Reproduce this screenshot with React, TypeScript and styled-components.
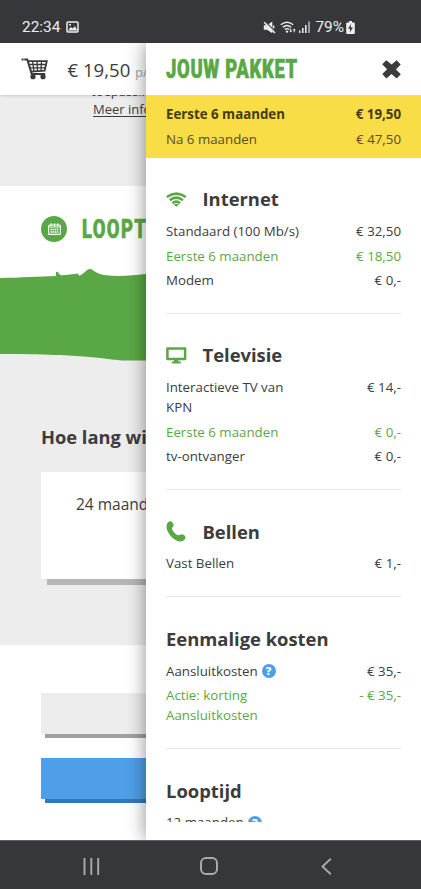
import React from "react";
import styled, { createGlobalStyle, css } from "styled-components";

const GlobalStyle = createGlobalStyle`
  *, *::before, *::after { box-sizing: border-box; }
  body {
    margin: 0;
    background: #fff;
    color: #3c3c3c;
    font-family: "Open Sans", "Noto Sans", sans-serif;
    overflow: hidden;
  }
  svg { display: block; flex: none; }
`;

const green = "#5aa845";
const blue = "#4f9fe8";
const chrome = "#36373b";

const Phone = styled.div`
  display: flex;
  flex-direction: column;
  width: 421px;
  height: 889px;
  overflow: hidden;
`;

const StatusBar = styled.header`
  display: flex;
  align-items: center;
  height: 43px;
  flex: none;
  padding: 11px 66px 0 22px;
  background: ${chrome};
  color: #eeeeef;
  font: 400 16px/20px Roboto, sans-serif;
`;

const Clock = styled.span`
  width: 44px;
  font-size: 15.4px;
`;

const StatusIcons = styled.div`
  display: flex;
  align-items: center;
  margin-left: auto;
`;

const MuteSlot = styled.span`
  margin-right: 4px;
`;

const SignalSlot = styled.span`
  margin-left: 1px;
`;

const Battery = styled.span`
  margin: 0 2px 0 4px;
  font-size: 15.4px;
`;

const Viewport = styled.main`
  position: relative;
  height: 796.5px;
  flex: none;
  overflow: hidden;
`;

const TopBar = styled.div`
  display: flex;
  align-items: center;
  position: relative;
  height: 52px;
  padding: 0 0 1px 20.5px;
  background: #fff;
  box-shadow: 0 1px 3px rgba(0, 0, 0, 0.16);
`;

const CartPrice = styled.span`
  margin: 1px 0 0 19px;
  font-size: 18.6px;
  white-space: nowrap;
  small {
    margin-left: 5px;
    font-size: 12.5px;
    color: #a3a3a3;
  }
`;

const Intro = styled.section`
  height: 91px;
  padding-left: 91px;
  background: #ededed;
  font-size: 13px;
  line-height: 18px;
  overflow: hidden;
  p { margin: -13px 0 0; white-space: nowrap; }
  a { display: block; margin-left: 2px; text-decoration: underline; text-underline-offset: 2px; }
`;

const StepTitle = styled.section`
  display: flex;
  align-items: center;
  height: 81px;
  padding: 5px 0 0 41px;
`;

const CalendarDot = styled.span`
  display: grid;
  place-items: center;
  width: 26px;
  height: 26px;
  border-radius: 50%;
  background: ${green};
`;

const Display = styled.h1<{ $spacing: number }>`
  margin: 0;
  color: ${green};
  font: 900 26px/30px Roboto, sans-serif;
  letter-spacing: ${(p) => p.$spacing}px;
  white-space: nowrap;
  -webkit-text-stroke: 0.6px ${green};
  transform: scaleX(0.71);
  transform-origin: left center;
`;

const StepName = styled.div`
  margin-left: 15px;
`;

const Duration = styled.section`
  height: 378px;
  background: linear-gradient(#fff 40px, #ededed 40px);
`;

const Question = styled.h2`
  margin: 62.5px 0 0 41px;
  font-size: 18.3px;
  line-height: 26px;
  white-space: nowrap;
`;

const OptionCard = styled.div`
  height: 107px;
  margin: 22px 0 0 41px;
  padding: 20px 0 0 35px;
  background: #fff;
  box-shadow: 6px 6px 0 #b6b6b6;
  font-size: 15.5px;
  line-height: 24px;
`;

const Actions = styled.section`
  display: flex;
  flex-direction: column;
  gap: 23.5px;
  padding: 48px 0 0 41px;
`;

const ActionButton = styled.button<{ $primary?: boolean }>`
  height: 41px;
  border: 0;
  background: ${(p) => (p.$primary ? blue : "#ededed")};
  box-shadow: 4px 4px 0 ${(p) => (p.$primary ? "#3478b8" : "#a0a0a0")};
`;

const Drawer = styled.aside`
  position: absolute;
  top: 0;
  right: 0;
  bottom: 0;
  width: 275.5px;
  background: #fff;
  box-shadow: 0 0 18px rgba(0, 0, 0, 0.45);
`;

const DrawerHeader = styled.div`
  display: flex;
  align-items: center;
  justify-content: space-between;
  height: 52px;
  padding: 0 20px;
`;

const rows = css`
  display: flex;
  flex-direction: column;
  gap: 4.1px;
`;

const Totals = styled.div`
  ${rows}
  height: 63px;
  padding: 9.4px 20px 0 20.5px;
  background: #f9dd47;
  color: #5a4c1e;
`;

const DrawerScroll = styled.div`
  height: 664px;
  padding: 0 20px 0 20.5px;
  overflow: hidden;
`;

const Section = styled.section`
  padding: 28.3px 0 22.7px;
  border-bottom: 1px solid #e8e8e8;
`;

const SectionTitle = styled.h2`
  display: flex;
  align-items: center;
  height: 26px;
  margin: 0 0 8.9px;
  font-size: 18.4px;
  line-height: 26px;
`;

const IconSlot = styled.span`
  width: 36.5px;
`;

const Rows = styled.div`
  ${rows}
`;

const Row = styled.div<{ $tone?: "discount" | "strong" }>`
  display: flex;
  justify-content: space-between;
  font-size: 13.3px;
  line-height: 20.3px;
  color: ${(p) => (p.$tone === "discount" ? green : "inherit")};
  ${(p) => p.$tone === "strong" && "font-weight: 700; color: #463a13;"}
`;

const RowLabel = styled.span`
  display: flex;
  align-items: center;
  max-width: 140px;
`;

const RowPrice = styled.span`
  white-space: nowrap;
`;

const Help = styled.span`
  display: inline-grid;
  place-items: center;
  width: 14px;
  height: 14px;
  margin-left: 4px;
  border-radius: 50%;
  background: ${blue};
  color: #fff;
  font-size: 11px;
  font-weight: 800;
  line-height: 14px;
`;

const NavBar = styled.nav`
  display: flex;
  align-items: center;
  justify-content: space-between;
  flex: 1;
  padding: 3px 89px 0 82.5px;
  border-top: 1px solid #5e6062;
  background: ${chrome};
`;

const HomeSlot = styled.span`
  margin-right: 3px;
`;

const PictureIcon = () => (
  <svg width="13" height="12" viewBox="0 0 13 12">
    <rect x="1" y="1" width="11" height="10" rx="1" fill="none" stroke="#eee" strokeWidth="1.5" />
    <path d="M2 9.5 4.8 6l1.7 1.6L9 5.2l2.4 4.3z" fill="#eee" />
    <circle cx="4" cy="3.8" r="1" fill="#eee" />
  </svg>
);

const MuteIcon = () => (
  <svg width="13" height="13" viewBox="0 0 13 13">
    <path d="M.8 4.300h3.200L9.300.5v11.700L4 8.700H.8z" fill="#eee" />
    <path d="M2.200.8 12.600 11" stroke={chrome} strokeWidth="1.300" />
    <path d="M1.200 1.200 12 12M10.600 4.500v3" stroke="#eee" strokeWidth="1.500" />
  </svg>
);

const StatusWifiIcon = () => (
  <svg width="17" height="13" viewBox="0 0 17 13" fill="none" stroke="#eee" strokeWidth="1.4">
    <path d="M.8 3.8Q7 -1.5 13.2 3.8M2.8 6.2Q7 2.8 11.2 6.2M4.8 8.4Q7 6.8 9.2 8.4" />
    <circle cx="7" cy="10.6" r="1.2" fill="#eee" stroke="none" />
    <path d="m9.2 9.7 1.5 1.8 1.5-1.8zM12.6 9.3 14.2 7.5 15.8 9.3z" fill="#eee" stroke="none" />
    <path d="M10.7 7.5v3M14.2 8.7v2.6" strokeWidth="1" />
  </svg>
);

const SignalIcon = () => (
  <svg width="13" height="12" viewBox="0 0 13 12" fill="#e8e8e8">
    <path d="M1 9.5h1.5V12H1zM4 7h1.6v5H4zM7 4h1.6v8H7z" />
    <path d="M10.2.5h1.6V12h-1.6z" fill="#b5b5b8" />
  </svg>
);

const BatteryIcon = () => (
  <svg width="9" height="13" viewBox="0 0 9 13">
    <path d="M3 0h3v1.5h1.8c.6 0 1 .4 1 1V12c0 .5-.4 1-1 1H1.2c-.6 0-1-.5-1-1V2.500c0-.6.4-1 1-1H3z" fill="#eee" />
    <path d="M5.200 3 2 7.800h2.200L3.800 11.500 7 6.600H4.800z" fill={chrome} />
  </svg>
);

const CartIcon = () => (
  <svg width="28" height="22" viewBox="0 0 28 22" fill="none" stroke="#3a3a3a">
    <path d="M.6 1.500h2M3.200 1.500h3.100l4.400 14.500h13.500" strokeWidth="2" />
    <path d="M6.800 3.200h19l-2.200 9.500-13.600 1" strokeWidth="1.800" />
    <path d="M8 6.500h17.200M9 9.900h15.500M11.500 3.500l1.500 9.500M16 3.500l.5 9.300M20.500 3.500l-.5 9" strokeWidth="1.300" />
    <circle cx="12" cy="18.700" r="2.600" fill="#3a3a3a" stroke="none" />
    <circle cx="22" cy="18.700" r="2.600" fill="#3a3a3a" stroke="none" />
  </svg>
);

const CloseIcon = () => (
  <svg width="19" height="19" viewBox="0 0 19 19">
    <path d="M.2 4.200 4.300.2l5.300 4.400L14.600.3l4.100 4.200-4.700 5 4.800 4.700-4.100 4.300-5.200-4.400-5.200 4.500L.3 14l4.800-4.700z" fill="#3c3c3c" />
  </svg>
);

const CalendarIcon = () => (
  <svg width="13" height="12" viewBox="0 0 13 12">
    <rect x=".6" y="2" width="11.800" height="9.400" rx="1" fill="none" stroke="#fff" strokeWidth="1.100" />
    <path d="M3.200.3v2.800M6.500.3v2.800M9.800.3v2.800M1 4h11" stroke="#fff" strokeWidth="1.200" />
    <path d="M2.500 6.500h8M2.500 9h8" stroke="#fff" strokeWidth="1.500" strokeDasharray="1.600 .5" />
  </svg>
);

const BrushStroke = () => (
  <svg width="421" height="94" viewBox="0 0 421 94">
    <path
      d="M0 11C20 10.800 40 9.300 56 9L56 5 57.500 4.800 60.500 8.200C67 8.300 73 6.800 78 6.500L79 8.700C84 7.500 86 2 90 2C94 2.500 95 6.500 104 8C119 10 133 8.500 145 7L421 5V92L145 93.500H122C100 91.500 91 87.500 0 87Z"
      fill={green}
    />
  </svg>
);

const WifiIcon = () => (
  <svg width="21" height="15" viewBox="0 0 21 15" fill="none" stroke={green} strokeWidth="2.500">
    <path d="M.8 5Q10.300-1.800 19.800 5M3.700 8.300Q10.300 3 16.900 8.300M6.500 11.200Q10.300 8 14.100 11.200" />
    <path d="M7.700 12.500Q10.300 10.800 12.900 12.500L10.300 14.800z" fill={green} stroke="none" />
  </svg>
);

const TvIcon = () => (
  <svg width="21" height="17" viewBox="0 0 21 17">
    <path d="M1.400 1.600h17.700v10.400h-17.700z" fill="none" stroke={green} strokeWidth="2.500" strokeLinejoin="round" />
    <path d="M8 13h4.500v1.500h2.300v1.900H5.800v-1.900H8z" fill={green} />
  </svg>
);

const PhoneIcon = () => (
  <svg width="20" height="21" viewBox="0 0 20 21">
    <path
      d="M4.300.2C6 .1 7.800 2.700 7.600 4.400C7.400 5.800 6 6.100 6 7.400C6 9.700 10.200 14 12.600 14.200C14 14.300 14.600 13 16.200 13.200C18 13.500 19.700 15.300 19.500 17C19.200 19 16.300 20.700 13.700 20.500C7.700 20.200.5 11.800.5 5.600C.5 3 2.100.4 4.300.2Z"
      fill={green}
    />
  </svg>
);

const RecentsIcon = () => (
  <svg width="17" height="17" viewBox="0 0 17 17" stroke="#a9aaac" strokeWidth="1.900">
    <path d="M1.500 0v17M8.300 0v17M15.200 0v17" />
  </svg>
);

const HomeIcon = () => (
  <svg width="18" height="18" viewBox="0 0 18 18">
    <rect x="1" y="1" width="16" height="16" rx="5" fill="none" stroke="#a9aaac" strokeWidth="2" />
  </svg>
);

const BackIcon = () => (
  <svg width="11" height="17" viewBox="0 0 11 17">
    <path d="M9.800.8 1.500 8.500l8.300 7.700" fill="none" stroke="#a9aaac" strokeWidth="1.900" />
  </svg>
);

type Line = { label: string; price?: string; discount?: boolean; help?: boolean };
type Group = { title: string; icon?: React.ReactNode; lines: Line[] };

const groups: Group[] = [
  {
    title: "Internet",
    icon: <WifiIcon />,
    lines: [
      { label: "Standaard (100 Mb/s)", price: "€ 32,50" },
      { label: "Eerste 6 maanden", price: "€ 18,50", discount: true },
      { label: "Modem", price: "€ 0,-" },
    ],
  },
  {
    title: "Televisie",
    icon: <TvIcon />,
    lines: [
      { label: "Interactieve TV van KPN", price: "€ 14,-" },
      { label: "Eerste 6 maanden", price: "€ 0,-", discount: true },
      { label: "tv-ontvanger", price: "€ 0,-" },
    ],
  },
  { title: "Bellen", icon: <PhoneIcon />, lines: [{ label: "Vast Bellen", price: "€ 1,-" }] },
  {
    title: "Eenmalige kosten",
    lines: [
      { label: "Aansluitkosten", price: "€ 35,-", help: true },
      { label: "Actie: korting Aansluitkosten", price: "- € 35,-", discount: true },
    ],
  },
  { title: "Looptijd", lines: [{ label: "12 maanden", help: true }] },
];

export default function App() {
  return (
    <Phone>
      <GlobalStyle />
      <StatusBar>
        <Clock>22:34</Clock>
        <PictureIcon />
        <StatusIcons>
          <MuteSlot>
            <MuteIcon />
          </MuteSlot>
          <StatusWifiIcon />
          <SignalSlot>
            <SignalIcon />
          </SignalSlot>
          <Battery>79%</Battery>
          <BatteryIcon />
        </StatusIcons>
      </StatusBar>
      <Viewport>
        <TopBar>
          <CartIcon />
          <CartPrice>
            € 19,50<small>p/m</small>
          </CartPrice>
        </TopBar>
        <Intro>
          <p>toepassing</p>
          <a>Meer info</a>
        </Intro>
        <StepTitle>
          <CalendarDot>
            <CalendarIcon />
          </CalendarDot>
          <StepName>
            <Display $spacing={1.9}>LOOPTIJD</Display>
          </StepName>
        </StepTitle>
        <Duration>
          <BrushStroke />
          <Question>Hoe lang wil je</Question>
          <OptionCard>24 maanden</OptionCard>
        </Duration>
        <Actions>
          <ActionButton />
          <ActionButton $primary />
        </Actions>
        <Drawer>
          <DrawerHeader>
            <Display $spacing={0.9}>JOUW PAKKET</Display>
            <CloseIcon />
          </DrawerHeader>
          <Totals>
            <Row $tone="strong">
              <RowLabel>Eerste 6 maanden</RowLabel>
              <RowPrice>€ 19,50</RowPrice>
            </Row>
            <Row>
              <RowLabel>Na 6 maanden</RowLabel>
              <RowPrice>€ 47,50</RowPrice>
            </Row>
          </Totals>
          <DrawerScroll>
            {groups.map((group) => (
              <Section key={group.title}>
                <SectionTitle>
                  {group.icon && <IconSlot>{group.icon}</IconSlot>}
                  {group.title}
                </SectionTitle>
                <Rows>
                  {group.lines.map((line) => (
                    <Row key={line.label} $tone={line.discount ? "discount" : undefined}>
                      <RowLabel>
                        {line.label}
                        {line.help && <Help>?</Help>}
                      </RowLabel>
                      <RowPrice>{line.price}</RowPrice>
                    </Row>
                  ))}
                </Rows>
              </Section>
            ))}
          </DrawerScroll>
        </Drawer>
      </Viewport>
      <NavBar>
        <RecentsIcon />
        <HomeSlot>
          <HomeIcon />
        </HomeSlot>
        <BackIcon />
      </NavBar>
    </Phone>
  );
}
